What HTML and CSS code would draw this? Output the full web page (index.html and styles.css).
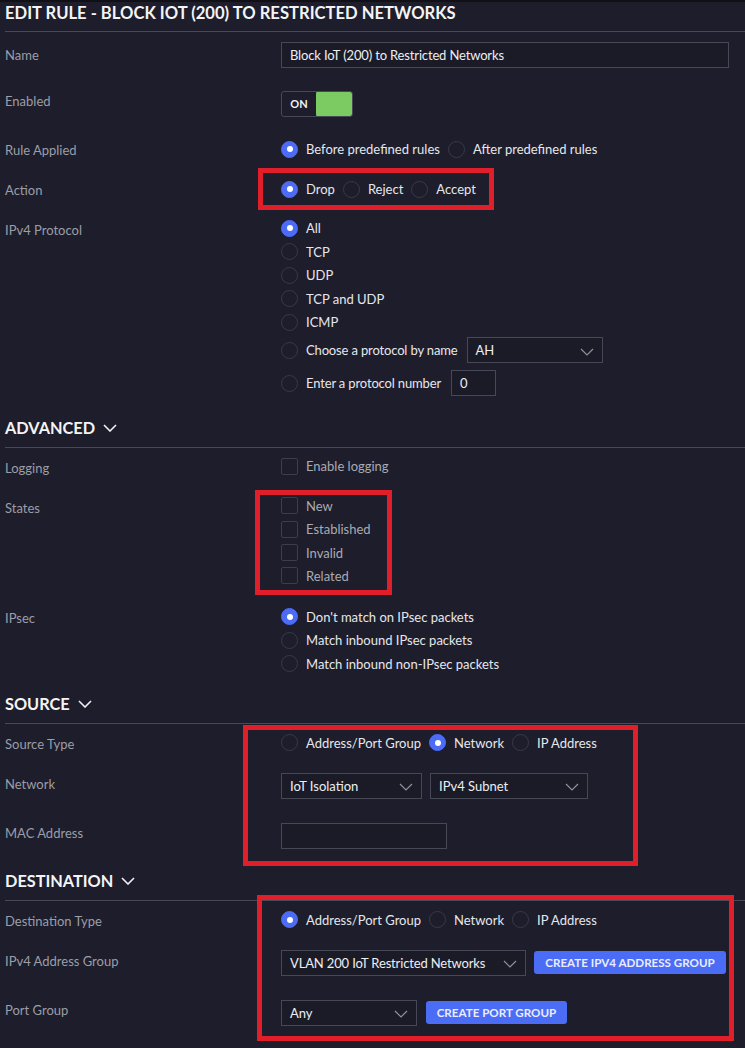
FILE: index.html
```html
<!DOCTYPE html>
<html>
<head>
<meta charset="utf-8">
<title>Edit Rule</title>
<link rel="stylesheet" href="styles.css">
</head>
<body>
<div class="page">
  <div class="topbar"></div>
  <h1 class="title">EDIT RULE - BLOCK IOT (200) TO RESTRICTED NETWORKS</h1>

  <div class="row r-name">
    <div class="label">Name</div>
    <div class="field"><div class="input input-name">Block IoT (200) to Restricted Networks</div></div>
  </div>

  <div class="row r-enabled">
    <div class="label">Enabled</div>
    <div class="field">
      <div class="toggle"><span class="toggle-on">ON</span><span class="toggle-knob"></span></div>
    </div>
  </div>

  <div class="row r-rule">
    <div class="label">Rule Applied</div>
    <div class="field inline">
      <span class="opt"><span class="radio checked"></span>Before predefined rules</span>
      <span class="opt"><span class="radio"></span>After predefined rules</span>
    </div>
  </div>

  <div class="row r-action">
    <div class="label">Action</div>
    <div class="field inline">
      <span class="opt"><span class="radio checked"></span>Drop</span>
      <span class="opt"><span class="radio"></span>Reject</span>
      <span class="opt"><span class="radio"></span>Accept</span>
    </div>
  </div>

  <div class="row r-proto">
    <div class="label">IPv4 Protocol</div>
    <div class="field stack">
      <div class="item"><span class="radio checked"></span>All</div>
      <div class="item"><span class="radio"></span>TCP</div>
      <div class="item"><span class="radio"></span>UDP</div>
      <div class="item"><span class="radio"></span>TCP and UDP</div>
      <div class="item"><span class="radio"></span>ICMP</div>
      <div class="item-ctl choose"><span class="radio"></span>Choose a protocol by name
        <div class="select sel-ah"><span>AH</span><svg class="chev" viewBox="0 0 14 8"><path d="M1 1 L7 7 L13 1"/></svg></div>
      </div>
      <div class="item-ctl enter"><span class="radio"></span>Enter a protocol number
        <div class="input input-num">0</div>
      </div>
    </div>
  </div>

  <div class="section s-adv">ADVANCED<svg class="hchev" viewBox="0 0 14 8"><path d="M1 1 L7 7 L13 1"/></svg></div>

  <div class="row r-log">
    <div class="label">Logging</div>
    <div class="field"><div class="item-c"><span class="check"></span>Enable logging</div></div>
  </div>

  <div class="row r-states">
    <div class="label">States</div>
    <div class="field stack">
      <div class="item-s"><span class="check"></span>New</div>
      <div class="item-s"><span class="check"></span>Established</div>
      <div class="item-s"><span class="check"></span>Invalid</div>
      <div class="item-s"><span class="check"></span>Related</div>
    </div>
  </div>

  <div class="row r-ipsec">
    <div class="label">IPsec</div>
    <div class="field stack">
      <div class="item"><span class="radio checked"></span>Don't match on IPsec packets</div>
      <div class="item"><span class="radio"></span>Match inbound IPsec packets</div>
      <div class="item"><span class="radio"></span>Match inbound non-IPsec packets</div>
    </div>
  </div>

  <div class="section s-src">SOURCE<svg class="hchev" viewBox="0 0 14 8"><path d="M1 1 L7 7 L13 1"/></svg></div>

  <div class="row r-stype">
    <div class="label">Source Type</div>
    <div class="field inline">
      <span class="opt"><span class="radio"></span>Address/Port Group</span>
      <span class="opt"><span class="radio checked"></span>Network</span>
      <span class="opt"><span class="radio"></span>IP Address</span>
    </div>
  </div>

  <div class="row r-net">
    <div class="label">Network</div>
    <div class="field ctl-row">
      <div class="select sel-iot"><span>IoT Isolation</span><svg class="chev" viewBox="0 0 14 8"><path d="M1 1 L7 7 L13 1"/></svg></div>
      <div class="select sel-sub"><span>IPv4 Subnet</span><svg class="chev" viewBox="0 0 14 8"><path d="M1 1 L7 7 L13 1"/></svg></div>
    </div>
  </div>

  <div class="row r-mac">
    <div class="label">MAC Address</div>
    <div class="field"><div class="input input-mac"></div></div>
  </div>

  <div class="section s-dst">DESTINATION<svg class="hchev" viewBox="0 0 14 8"><path d="M1 1 L7 7 L13 1"/></svg></div>

  <div class="row r-dtype">
    <div class="label">Destination Type</div>
    <div class="field inline">
      <span class="opt"><span class="radio checked"></span>Address/Port Group</span>
      <span class="opt"><span class="radio"></span>Network</span>
      <span class="opt"><span class="radio"></span>IP Address</span>
    </div>
  </div>

  <div class="row r-agroup">
    <div class="label">IPv4 Address Group</div>
    <div class="field ctl-row">
      <div class="select sel-vlan"><span>VLAN 200 IoT Restricted Networks</span><svg class="chev" viewBox="0 0 14 8"><path d="M1 1 L7 7 L13 1"/></svg></div>
      <button class="btn btn-addr">CREATE IPV4 ADDRESS GROUP</button>
    </div>
  </div>

  <div class="row r-port">
    <div class="label">Port Group</div>
    <div class="field ctl-row">
      <div class="select sel-any"><span>Any</span><svg class="chev" viewBox="0 0 14 8"><path d="M1 1 L7 7 L13 1"/></svg></div>
      <button class="btn btn-port">CREATE PORT GROUP</button>
    </div>
  </div>

  <div class="mark mark-action"></div>
  <div class="mark mark-states"></div>
  <div class="mark mark-source"></div>
  <div class="mark mark-dest"></div>
</div>
</body>
</html>
```

FILE: styles.css
```css
* { box-sizing: border-box; }
html, body { margin: 0; padding: 0; }
body {
  background: #1d1d2b;
  font-family: Lato, "Open Sans", sans-serif;
  color: #e6e7ec;
  font-size: 13px;
}
.page {
  position: relative;
  width: 745px;
  height: 1048px;
  overflow: hidden;
  padding-left: 5px;
}
.topbar {
  height: 2px;
  margin-left: -5px;
  background: #101016;
}
.title {
  margin: 0;
  padding: 1px 0 8px;
  font-size: 16.6px;
  line-height: 20px;
  font-weight: 700;
  color: #f4f4f6;
  border-bottom: 1px solid #484857;
}
.row {
  display: grid;
  grid-template-columns: 276px 1fr;
  align-items: start;
}
.label {
  color: #9c9ea8;
  line-height: 20px;
  font-size: 13px;
  margin-bottom: -6px;
}
.field { min-width: 0; }
.inline { display: flex; align-items: center; height: 20px; gap: 8px; }
.opt, .item, .item-c, .item-s, .item-ctl {
  display: flex;
  align-items: center;
  gap: 8px;
  white-space: nowrap;
}
.stack { display: flex; flex-direction: column; }
.item { height: 23.5px; }
.item-s { height: 23.33px; }
.item-c { height: 20px; }
.item-ctl { letter-spacing: -0.15px; }

.radio {
  flex: none;
  width: 17px;
  height: 17px;
  border-radius: 50%;
  border: 1.5px solid #393a47;
  position: relative;
}
.radio.checked {
  background: #4c6cf6;
  border-color: #4c6cf6;
}
.radio.checked::after {
  content: "";
  position: absolute;
  left: 50%;
  top: 50%;
  width: 6px;
  height: 6px;
  margin: -3px 0 0 -3px;
  border-radius: 50%;
  background: #ffffff;
}
.check {
  flex: none;
  width: 17px;
  height: 17px;
  border: 1.5px solid #3d3e4b;
  border-radius: 2px;
}
.item-c, .item-s { color: #a9abb4; }

.input, .select {
  border: 1px solid #474856;
  background: #1b1b28;
  color: #eceef2;
  height: 26px;
  line-height: 24px;
  padding: 0 8px;
  white-space: nowrap;
  letter-spacing: 0;
}
.input-name { width: 448px; letter-spacing: -0.15px; }
.input-num { width: 45px; margin-left: 2px; }
.input-mac { width: 166px; }
.select {
  display: flex;
  align-items: center;
  justify-content: space-between;
}
.chev {
  width: 14px;
  height: 8px;
  flex: none;
  margin-top: 3px;
}
.chev path {
  fill: none;
  stroke: #8e909a;
  stroke-width: 1.2;
}
.sel-ah { width: 136px; margin-left: 1px; }
.sel-iot { width: 141px; }
.sel-sub { width: 158px; }
.sel-vlan { width: 245px; letter-spacing: -0.15px; }
.sel-any { width: 136px; }
.ctl-row { display: flex; align-items: center; gap: 8px; }

.toggle {
  display: flex;
  width: 72px;
  height: 26px;
  border: 1px solid #474856;
  border-radius: 3px;
  overflow: hidden;
}
.toggle-on {
  width: 34px;
  text-align: center;
  line-height: 24px;
  font-size: 11px;
  font-weight: 700;
  color: #f2f2f4;
}
.toggle-knob {
  flex: 1;
  margin: -1px -1px -1px 0;
  background: #7ccb62;
  border-radius: 3px;
}

.btn {
  border: none;
  border-radius: 3px;
  background: #4b6cf4;
  color: #e9edff;
  font-family: Lato, "Open Sans", sans-serif;
  font-weight: 700;
  font-size: 11.6px;
  height: 23px;
  padding: 0;
  white-space: nowrap;
  text-align: center;
}
.btn-addr { width: 192px; }
.btn-port { width: 141px; margin-left: 1px; }

.section {
  display: flex;
  align-items: center;
  font-size: 16.3px;
  line-height: 20px;
  font-weight: 700;
  color: #f4f4f6;
  padding-bottom: 9px;
  border-bottom: 1px solid #484857;
}
.hchev { width: 14px; height: 8px; margin-left: 8px; }
.hchev path { fill: none; stroke: #f0f0f4; stroke-width: 1.6; }

/* vertical rhythm */
.r-name { margin-top: 10px; }
.r-name .label { padding-top: 3px; }
.r-enabled { margin-top: 23px; }
.r-rule { margin-top: 22px; }
.r-rule .label { padding-top: 1px; }
.r-action { margin-top: 20px; }
.r-action .label { padding-top: 1px; }
.r-proto { margin-top: 17.25px; }
.r-proto .label { padding-top: 3.75px; }
.choose { height: 26px; margin-top: 3.25px; }
.enter { height: 26px; margin-top: 7px; }
.s-adv { margin-top: 22px; }
.r-log { margin-top: 8px; }
.r-log .label { padding-top: 2px; }
.r-states { margin-top: 18.33px; }
.r-states .label { padding-top: 3.67px; }
.r-ipsec { margin-top: 17.58px; }
.r-ipsec .label { padding-top: 2.75px; }
.s-src { margin-top: 18.25px; }
.r-stype { margin-top: 9px; }
.r-stype .label { padding-top: 1px; }
.r-net { margin-top: 20px; }
.r-net .label { padding-top: 1px; }
.r-mac { margin-top: 24px; }
.s-dst { margin-top: 22px; }
.r-dtype { margin-top: 9px; }
.r-dtype .label { padding-top: 1px; }
.r-agroup { margin-top: 20px; }
.r-agroup .label { padding-top: 1px; }
.r-port { margin-top: 24px; }

/* red annotation boxes over the form */
.mark {
  position: absolute;
  border: 5px solid #e11f2b;
  pointer-events: none;
}
.mark-action { left: 258px; top: 168px; width: 236px; height: 42px; }
.mark-states { left: 255px; top: 490px; width: 137px; height: 105px; }
.mark-source { left: 243px; top: 725px; width: 395px; height: 141px; }
.mark-dest { left: 257px; top: 895px; width: 477px; height: 146px; }
```
